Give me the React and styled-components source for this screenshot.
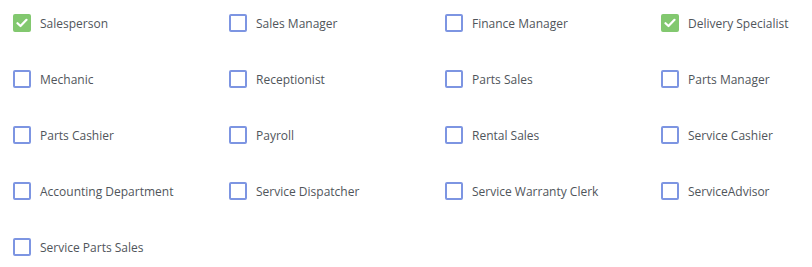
import React, { useState } from "react";
import styled, { createGlobalStyle } from "styled-components";

const GlobalStyle = createGlobalStyle`
  body {
    margin: 0;
    background: #ffffff;
    font-family: "Open Sans", "Liberation Sans", sans-serif;
  }
`;

const RoleGrid = styled.div`
  display: grid;
  grid-template-columns: repeat(3, 216px) 1fr;
  row-gap: 38px;
  padding: 14px 0 0 13px;
`;

const RoleItem = styled.label`
  display: flex;
  align-items: center;
  gap: 9px;
  height: 18px;
  cursor: pointer;
`;

const Box = styled.span`
  box-sizing: border-box;
  width: 18px;
  height: 18px;
  flex-shrink: 0;
  border-radius: 2px;
  border: 2px solid ${(props) => (props.$checked ? "#82c86f" : "#7d95e2")};
  background-color: ${(props) => (props.$checked ? "#82c86f" : "#ffffff")};
  display: flex;
  align-items: center;
  justify-content: center;
`;

const RoleName = styled.span`
  font-size: 12px;
  color: #50555b;
  white-space: nowrap;
`;

const roles = [
  { name: "Salesperson", checked: true },
  { name: "Sales Manager" },
  { name: "Finance Manager" },
  { name: "Delivery Specialist", checked: true },
  { name: "Mechanic" },
  { name: "Receptionist" },
  { name: "Parts Sales" },
  { name: "Parts Manager" },
  { name: "Parts Cashier" },
  { name: "Payroll" },
  { name: "Rental Sales" },
  { name: "Service Cashier" },
  { name: "Accounting Department" },
  { name: "Service Dispatcher" },
  { name: "Service Warranty Clerk" },
  { name: "ServiceAdvisor" },
  { name: "Service Parts Sales" },
];

const Check = () => (
  <svg width="12" height="10" viewBox="0 0 12 10">
    <path
      d="M1.5 5.2 L4.5 8 L10.5 1.8"
      fill="none"
      stroke="#ffffff"
      strokeWidth="2.2"
      strokeLinecap="round"
      strokeLinejoin="round"
    />
  </svg>
);

function App() {
  const [selected, setSelected] = useState(
    roles.filter((r) => r.checked).map((r) => r.name)
  );

  const toggle = (name) =>
    setSelected((prev) =>
      prev.includes(name) ? prev.filter((n) => n !== name) : [...prev, name]
    );

  return (
    <>
      <GlobalStyle />
      <RoleGrid>
        {roles.map((role) => {
          const checked = selected.includes(role.name);
          return (
            <RoleItem key={role.name} onClick={() => toggle(role.name)}>
              <Box $checked={checked}>{checked && <Check />}</Box>
              <RoleName>{role.name}</RoleName>
            </RoleItem>
          );
        })}
      </RoleGrid>
    </>
  );
}

export default App;
